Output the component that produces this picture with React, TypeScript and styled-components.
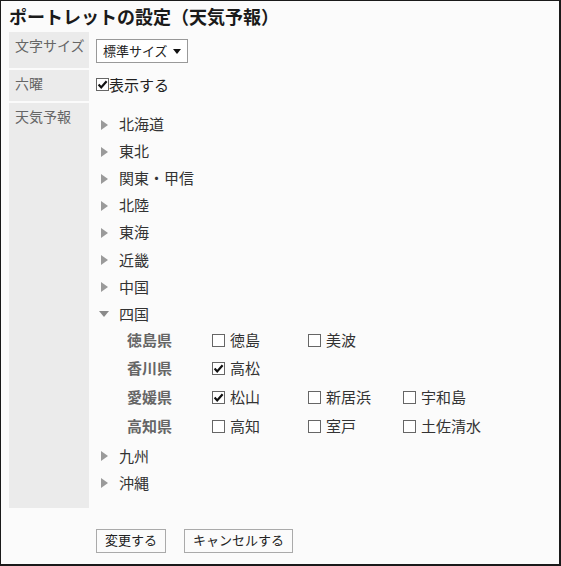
import styled, { createGlobalStyle } from "styled-components";

const GlobalStyle = createGlobalStyle`
  html, body {
    margin: 0;
    padding: 0;
    background: #fbfbfb;
  }
  body {
    font-family: "Noto Sans CJK JP", "Noto Sans", sans-serif;
    color: #333;
  }
`;

type Pref = {
  name: string;
  cities: { name: string; checked: boolean }[];
};

const regionsBefore = ["北海道", "東北", "関東・甲信", "北陸", "東海", "近畿", "中国"];
const regionsAfter = ["九州", "沖縄"];

const shikoku: Pref[] = [
  {
    name: "徳島県",
    cities: [
      { name: "徳島", checked: false },
      { name: "美波", checked: false },
    ],
  },
  { name: "香川県", cities: [{ name: "高松", checked: true }] },
  {
    name: "愛媛県",
    cities: [
      { name: "松山", checked: true },
      { name: "新居浜", checked: false },
      { name: "宇和島", checked: false },
    ],
  },
  {
    name: "高知県",
    cities: [
      { name: "高知", checked: false },
      { name: "室戸", checked: false },
      { name: "土佐清水", checked: false },
    ],
  },
];

const Check = ({ checked }: { checked: boolean }) => (
  <Box>
    {checked && (
      <svg width="11" height="11" viewBox="0 0 11 11">
        <path
          d="M1.6 5.6 L4.2 8.4 L9.6 2.2"
          fill="none"
          stroke="#111"
          strokeWidth="2.2"
        />
      </svg>
    )}
  </Box>
);

const Region = ({ name, open }: { name: string; open?: boolean }) => (
  <Item>
    <ArrowCell $open={open}>
      <Arrow $open={open} />
    </ArrowCell>
    {name}
  </Item>
);

const App = () => {
  return (
    <>
      <GlobalStyle />
      <Frame>
        <Title>ポートレットの設定（天気予報）</Title>
        <Form>
          <Label>文字サイズ</Label>
          <SelectCell>
            <Select>
              標準サイズ
              <Caret />
            </Select>
          </SelectCell>

          <Label>六曜</Label>
          <CheckCell>
            <Check checked />
            表示する
          </CheckCell>

          <Label>天気予報</Label>
          <Tree>
            {regionsBefore.map((r) => (
              <Region key={r} name={r} />
            ))}
            <Region name="四国" open />
            <PrefTable>
              {shikoku.map((p) => (
                <PrefRow key={p.name}>
                  <PrefName>{p.name}</PrefName>
                  {p.cities.map((c) => (
                    <City key={c.name}>
                      <Check checked={c.checked} />
                      {c.name}
                    </City>
                  ))}
                </PrefRow>
              ))}
            </PrefTable>
            {regionsAfter.map((r) => (
              <Region key={r} name={r} />
            ))}
          </Tree>
        </Form>
        <Buttons>
          <Button>変更する</Button>
          <Button>キャンセルする</Button>
        </Buttons>
      </Frame>
    </>
  );
};

export default App;

const Frame = styled.div`
  width: 561px;
  height: 566px;
  box-sizing: border-box;
  border: 1px solid #1a1a1a;
  border-right-width: 2px;
  border-bottom-width: 2px;
  background: #fbfbfb;
  padding: 4px 0 0 8px;
  overflow: hidden;
`;

const Title = styled.h1`
  margin: 0;
  font-size: 18px;
  font-weight: bold;
  line-height: 22px;
  color: #1a1a1a;
`;

const Form = styled.div`
  display: grid;
  grid-template-columns: 80px 1fr;
  column-gap: 7px;
  row-gap: 2px;
  margin-top: 5px;
`;

const Label = styled.div`
  background: #ebebeb;
  color: #666;
  font-size: 14px;
  line-height: 17px;
  padding: 5px 0 0 6px;
`;

const SelectCell = styled.div`
  padding: 7px 0 5px;
`;

const Select = styled.div`
  width: 92px;
  height: 24px;
  box-sizing: border-box;
  border: 1px solid #999;
  background: #fff;
  display: flex;
  align-items: center;
  padding: 0 0 2px 6px;
  font-size: 13px;
  color: #222;
  gap: 5px;
`;

const Caret = styled.span`
  width: 0;
  height: 0;
  margin-top: 2px;
  border-left: 4px solid transparent;
  border-right: 4px solid transparent;
  border-top: 5px solid #111;
`;

const CheckCell = styled.div`
  height: 31px;
  display: flex;
  align-items: center;
  font-size: 15px;
  color: #222;
  padding-bottom: 2px;
  box-sizing: border-box;
`;

const Box = styled.span`
  width: 13px;
  height: 13px;
  box-sizing: border-box;
  border: 1px solid #666;
  background: #fff;
  display: inline-flex;
  align-items: center;
  justify-content: center;
  flex-shrink: 0;
`;

const Tree = styled.div`
  padding: 7px 0 12px;
  font-size: 15px;
  color: #333;
`;

const Item = styled.div`
  height: 27.1px;
  display: flex;
  align-items: center;
`;

const ArrowCell = styled.span<{ $open?: boolean }>`
  width: 23px;
  box-sizing: border-box;
  padding-left: ${(p) => (p.$open ? "3px" : "5px")};
  display: flex;
  align-items: center;
  padding-top: 2px;
`;

const Arrow = styled.span<{ $open?: boolean }>`
  width: 0;
  height: 0;
  ${(p) =>
    p.$open
      ? `
    border-left: 5px solid transparent;
    border-right: 5px solid transparent;
    border-top: 6px solid #8a8a8a;
  `
      : `
    border-top: 5px solid transparent;
    border-bottom: 5px solid transparent;
    border-left: 7px solid #9a9a9a;
  `}
`;

const PrefTable = styled.div`
  margin: -2px 0 2px 31px;
`;

const PrefRow = styled.div`
  height: 28.7px;
  display: grid;
  grid-template-columns: 85px 96px 95px auto;
  align-items: center;
`;

const PrefName = styled.span`
  font-weight: bold;
  color: #666;
`;

const City = styled.span`
  display: flex;
  align-items: center;
  gap: 5px;
  color: #333;

  & > span {
    margin-top: 2px;
  }
`;

const Buttons = styled.div`
  display: flex;
  gap: 18px;
  margin: 21px 0 0 87px;
`;

const Button = styled.button`
  height: 24px;
  box-sizing: border-box;
  padding: 0 8px 2px;
  border: 1px solid #aaa;
  border-radius: 0;
  background: #fbfbfb;
  font-family: "Noto Sans CJK JP", "Noto Sans", sans-serif;
  font-size: 13px;
  color: #222;
  line-height: 20px;
`;
